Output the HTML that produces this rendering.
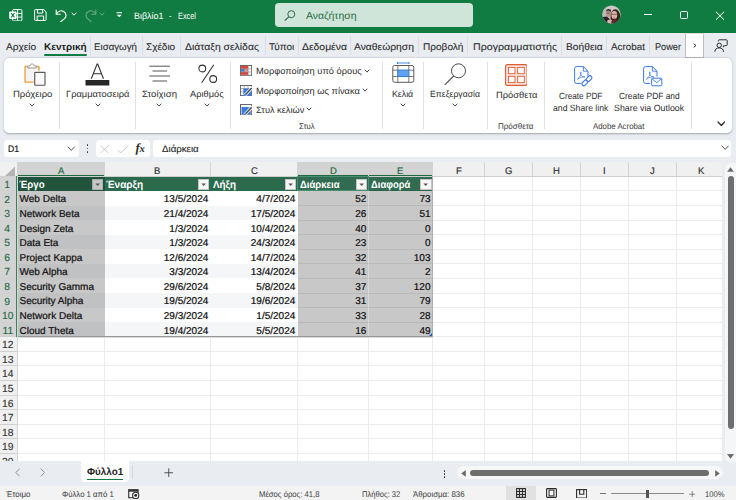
<!DOCTYPE html>
<html lang="el"><head><meta charset="utf-8"><title>Βιβλίο1 - Excel</title>
<style>
*{box-sizing:border-box;margin:0;padding:0}
html,body{width:736px;height:500px;overflow:hidden;background:#e9ecf0;font-family:"Liberation Sans",sans-serif;color:#2b2b2b;text-rendering:geometricPrecision}
#app{position:relative;width:736px;height:500px;overflow:hidden}
#app div,#app svg{position:absolute}
.t{white-space:nowrap;line-height:1;transform-origin:0 0}
.sep{top:35.500px;width:1px;height:19.500px;background:#dadde2}
.vs{top:62px;width:1px;height:67px;background:#e0e0e0}
.box{background:#fff;border-radius:3.5px;top:140px;height:17px}
#grid{left:0;top:162px;width:722.5px;height:299.5px;background:#fff;overflow:hidden}
.ch{top:0;height:14.5px;background:#f0f0f0}
.cell{font-size:10px;color:#111;white-space:nowrap;overflow:hidden;line-height:1}
.r{text-align:right}
.hl{left:0;height:1px;background:#ececec}
.vl{top:0;width:1px;background:#ececec}
</style></head><body><div id="app">

<div id="title" style="left:0;top:0;width:736px;height:32.5px;background:#107c41"></div>
<svg style="left:9px;top:8.5px" width="13.5" height="12.5" viewBox="0 0 13.5 12.5"><rect x="3.6" y="0.6" width="9.300" height="11.300" rx="1" fill="none" stroke="#fff" stroke-width="1"/><path d="M8.600 0.600v11.300M3.600 4.400h9.300M3.600 8.100h9.300" stroke="#fff" stroke-width="0.900"/><rect x="0.200" y="2.600" width="7.300" height="7.300" rx="0.800" fill="#fff"/><path d="M2.200 4.200l3.300 4.100M5.500 4.200L2.200 8.300" stroke="#107c41" stroke-width="1.100"/></svg>
<svg style="left:33.500px;top:9px" width="13" height="12" viewBox="0 0 13 12"><path d="M1.300 0.600h8.400l2.400 2.200v7.900a0.700 0.700 0 0 1-.700.700H1.300a0.700 0.700 0 0 1-.700-.700V1.300a0.700 0.700 0 0 1 .700-.700z" fill="none" stroke="#fff" stroke-width="1"/><path d="M3.400 0.800v3.300h5.300V0.800M3.200 11.200V7h6.400v4.200" fill="none" stroke="#fff" stroke-width="1"/></svg>
<svg style="left:55px;top:8.500px" width="13" height="13.500" viewBox="0 0 13 13.500"><path d="M1.200 0.800v4.400h4.400" fill="none" stroke="#fff" stroke-width="1.100"/><path d="M1.400 5C2.800 2.400 5.800 1 8.600 2.400c2.800 1.500 3.200 5.200.900 7.300L5.400 12.900" fill="none" stroke="#fff" stroke-width="1.100"/></svg>
<svg style="left:70.50px;top:12.40px" width="6" height="4.2" viewBox="0 0 6 4.2"><path d="M1 1L3.0 3.2L5 1" fill="none" stroke="#fff" stroke-width="1" stroke-linecap="round" stroke-linejoin="round"/></svg>
<svg style="left:84px;top:8.500px;opacity:.36" width="13" height="13.500" viewBox="0 0 13 13.500"><path d="M11.800 0.800v4.400H7.400" fill="none" stroke="#fff" stroke-width="1.100"/><path d="M11.600 5C10.200 2.400 7.200 1 4.400 2.400c-2.800 1.500-3.200 5.200-.900 7.300l4.100 3.200" fill="none" stroke="#fff" stroke-width="1.100"/></svg>
<svg style="left:99.30px;top:12.40px;opacity:0.36" width="6" height="4.2" viewBox="0 0 6 4.2"><path d="M1 1L3.0 3.2L5 1" fill="none" stroke="#fff" stroke-width="1" stroke-linecap="round" stroke-linejoin="round"/></svg>
<svg style="left:115.500px;top:12.200px" width="6.500" height="6" viewBox="0 0 6.500 6"><path d="M0.500 0.700h5.500" stroke="#fff" stroke-width="1"/><path d="M0.700 2.800L3.250 5.300 5.800 2.800z" fill="#fff"/></svg>
<div class="t" style="left:133.80px;top:11.98px;font-size:9.2px;transform:scaleX(0.9717);color:#fff;">Βιβλίο1</div>
<div class="t" style="left:169.20px;top:11.98px;font-size:9.2px;transform:scaleX(0.7787);color:#fff;">-</div>
<div class="t" style="left:178.20px;top:11.98px;font-size:9.2px;transform:scaleX(0.8002);color:#fff;">Excel</div>
<div style="left:274.500px;top:3px;width:198.500px;height:24px;background:#cfe5d9;border-radius:4px"></div>
<svg style="left:284px;top:9.500px" width="12" height="11" viewBox="0 0 12 11"><circle cx="7.300" cy="4.200" r="3.500" fill="none" stroke="#2d6b4a" stroke-width="1"/><path d="M4.800 6.800L0.800 10.500" stroke="#2d6b4a" stroke-width="1.100"/></svg>
<div class="t" style="left:305.80px;top:11.97px;font-size:10.2px;transform:scaleX(1.0291);color:#2a6a48;">Αναζήτηση</div>
<svg style="left:602px;top:5.100px" width="19" height="19" viewBox="0 0 19 19"><defs><clipPath id="av"><circle cx="9.500" cy="9.500" r="9.100"/></clipPath></defs><g clip-path="url(#av)"><rect width="19" height="19" fill="#cdc8c8"/><rect x="0" y="0" width="5" height="19" fill="#bdb8b8"/><ellipse cx="6.700" cy="5.800" rx="2.500" ry="1.700" fill="#3a3230"/><ellipse cx="6.400" cy="8.800" rx="2.300" ry="3.100" fill="#b4968a"/><path d="M4.300 8h4.200" stroke="#5a4a46" stroke-width="0.700"/><path d="M0 12.300L4.800 11.500 8.500 14.500V19H0z" fill="#27262b"/><ellipse cx="13.400" cy="11.800" rx="4.900" ry="7.600" fill="#40231f"/><ellipse cx="7.800" cy="16.800" rx="2.600" ry="2.400" fill="#d8b8ac"/><ellipse cx="12.300" cy="9.900" rx="2.900" ry="3.900" fill="#dbb6a6"/><path d="M9.700 9.300h5.200" stroke="#3a2a2a" stroke-width="0.600"/><ellipse cx="12.400" cy="12.200" rx="0.900" ry="0.400" fill="#b24848"/><path d="M9.500 16L13 15 19 17V19H9z" fill="#57302f"/></g></svg>
<div style="left:643.500px;top:14px;width:8px;height:1px;background:#fff"></div>
<div style="left:679.500px;top:11px;width:8px;height:8px;border:1px solid #fff;border-radius:1.500px"></div>
<svg style="left:715px;top:10.500px" width="10" height="9.500" viewBox="0 0 10 9.500"><path d="M0.900 0.700l8.200 8.100M9.100 0.700L0.900 8.800" stroke="#fff" stroke-width="1"/></svg>
<div class="t" style="left:5.50px;top:42.97px;font-size:9.7px;transform:scaleX(1.0465);color:#303030;-webkit-text-stroke:.1px #303030;">Αρχείο</div>
<div class="t" style="left:44.00px;top:42.97px;font-size:9.7px;transform:scaleX(1.0346);font-weight:bold;color:#1f1f1f;">Κεντρική</div>
<div class="t" style="left:94.30px;top:42.97px;font-size:9.7px;transform:scaleX(1.0029);color:#303030;-webkit-text-stroke:.1px #303030;">Εισαγωγή</div>
<div class="t" style="left:145.80px;top:42.97px;font-size:9.7px;transform:scaleX(1.0292);color:#303030;-webkit-text-stroke:.1px #303030;">Σχέδιο</div>
<div class="t" style="left:185.00px;top:42.97px;font-size:9.7px;transform:scaleX(1.0730);color:#303030;-webkit-text-stroke:.1px #303030;">Διάταξη σελίδας</div>
<div class="t" style="left:269.30px;top:42.97px;font-size:9.7px;transform:scaleX(1.0289);color:#303030;-webkit-text-stroke:.1px #303030;">Τύποι</div>
<div class="t" style="left:302.00px;top:42.97px;font-size:9.7px;transform:scaleX(1.0726);color:#303030;-webkit-text-stroke:.1px #303030;">Δεδομένα</div>
<div class="t" style="left:354.00px;top:42.97px;font-size:9.7px;transform:scaleX(1.0646);color:#303030;-webkit-text-stroke:.1px #303030;">Αναθεώρηση</div>
<div class="t" style="left:422.50px;top:42.97px;font-size:9.7px;transform:scaleX(1.0399);color:#303030;-webkit-text-stroke:.1px #303030;">Προβολή</div>
<div class="t" style="left:472.50px;top:42.97px;font-size:9.7px;transform:scaleX(1.0989);color:#303030;-webkit-text-stroke:.1px #303030;">Προγραμματιστής</div>
<div class="t" style="left:565.50px;top:42.97px;font-size:9.7px;transform:scaleX(1.0568);color:#303030;-webkit-text-stroke:.1px #303030;">Βοήθεια</div>
<div class="t" style="left:610.90px;top:42.97px;font-size:9.7px;transform:scaleX(1.0205);color:#303030;-webkit-text-stroke:.1px #303030;">Acrobat</div>
<div class="t" style="left:655.10px;top:42.97px;font-size:9.7px;transform:scaleX(0.9455);color:#303030;-webkit-text-stroke:.1px #303030;">Power</div>
<div class="t" style="left:684.00px;top:42.97px;font-size:9.7px;transform:scaleX(0.7751);color:#333;">P</div>
<div style="left:43.800px;top:54px;width:43.200px;height:1.700px;background:#107c41;border-radius:1px"></div>
<div class="sep" style="left:89.5px"></div>
<div class="sep" style="left:142.0px"></div>
<div class="sep" style="left:179.5px"></div>
<div class="sep" style="left:264.5px"></div>
<div class="sep" style="left:298.0px"></div>
<div class="sep" style="left:350.0px"></div>
<div class="sep" style="left:417.7px"></div>
<div class="sep" style="left:467.0px"></div>
<div class="sep" style="left:560.8px"></div>
<div class="sep" style="left:605.9px"></div>
<div class="sep" style="left:649.3px"></div>
<div style="left:682px;top:34px;width:4px;height:22px;background:#e9ecf0"></div>
<div style="left:685.200px;top:33px;width:18.400px;height:25px;background:#fff;border:1px solid #bdbdbd;border-top-color:#dcdcdc;border-radius:1.500px"></div>
<svg style="left:692.600px;top:42.900px" width="4.400" height="5" viewBox="0 0 4.400 5"><path d="M1 1L3 2.500 1 4" fill="none" stroke="#2e2e2e" stroke-width="1" stroke-linecap="round" stroke-linejoin="round"/></svg>
<svg style="left:713.500px;top:39px" width="14" height="13.500" viewBox="0 0 14 13.500"><circle cx="5.200" cy="6.300" r="2.200" fill="none" stroke="#2e2e2e" stroke-width="1"/><path d="M0.900 12.800c0-2.600 1.600-3.900 4.300-3.900s4.300 1.300 4.300 3.900" fill="none" stroke="#2e2e2e" stroke-width="1"/><path d="M4.400 2.400V1.600a0.800 0.800 0 0 1 .8-.8h7.200a0.800 0.800 0 0 1 .8.800v4.200a0.800 0.800 0 0 1-.8.800h-1.600l-1.500 1.400V6.600H9" fill="none" stroke="#2e2e2e" stroke-width="1"/></svg>
<div style="left:3.600px;top:58.200px;width:728.200px;height:74.900px;background:#fff;border-radius:5px;box-shadow:0 0.800px 2px rgba(0,0,0,.30)"></div>
<div class="vs" style="left:58.9px"></div>
<div class="vs" style="left:135.3px"></div>
<div class="vs" style="left:230.0px"></div>
<div class="vs" style="left:382.0px"></div>
<div class="vs" style="left:422.5px"></div>
<div class="vs" style="left:486.5px"></div>
<div class="vs" style="left:543.5px"></div>
<div class="vs" style="left:691.3px"></div>
<svg style="left:23.500px;top:63px" width="22" height="23" viewBox="0 0 22 23"><path d="M4.300 3.600H1.700a0.600 0.600 0 0 0-.6.600v14.200a0.600 0.600 0 0 0 .6.600h7.800" fill="none" stroke="#f29d38" stroke-width="1.500"/><rect x="1.800" y="4.300" width="9" height="14" fill="#f4f4f4"/><path d="M11.700 3.600h2.600a0.600 0.600 0 0 1 .6.600v3.600" fill="none" stroke="#f29d38" stroke-width="1.500"/><path d="M3.800 5V3.700c0-.5.400-.9.900-.9h1.200C6.100 1.700 7 0.900 8 0.900s1.900.8 2.100 1.900h1.200c.5 0 .9.400.9.900V5z" fill="#fff" stroke="#8a8a8a" stroke-width="0.900"/><rect x="10.700" y="9.300" width="10.300" height="12.900" rx="0.500" fill="#fafafa" stroke="#585858" stroke-width="1.150"/></svg>
<div class="t" style="left:13.00px;top:89.97px;font-size:9.0px;transform:scaleX(1.0574);color:#2e2e2e;">Πρόχειρο</div>
<svg style="left:29.40px;top:103.15px" width="6.0" height="4.1" viewBox="0 0 6.0 4.1"><path d="M1 1L3.0 3.1L5.0 1" fill="none" stroke="#444" stroke-width="1.0" stroke-linecap="round" stroke-linejoin="round"/></svg>
<svg style="left:85px;top:63px" width="25" height="23" viewBox="0 0 25 23"><path d="M6.300 15.700L12.100 1h.6l5.800 14.700M8.300 10.800h8.200" fill="none" stroke="#333" stroke-width="1.100"/><rect x="0.500" y="17" width="23.800" height="5.500" fill="#262626"/></svg>
<div class="t" style="left:65.80px;top:89.97px;font-size:9.0px;transform:scaleX(1.0367);color:#2e2e2e;">Γραμματοσειρά</div>
<svg style="left:94.50px;top:103.15px" width="6.0" height="4.1" viewBox="0 0 6.0 4.1"><path d="M1 1L3.0 3.1L5.0 1" fill="none" stroke="#444" stroke-width="1.0" stroke-linecap="round" stroke-linejoin="round"/></svg>
<svg style="left:149px;top:64.500px" width="21.500" height="17.500" viewBox="0 0 21.500 17.500"><path d="M0.300 1.200h20.700M3.500 6h14.500M0.300 11h20.700M3.500 16h14.500" stroke="#555" stroke-width="1"/></svg>
<div class="t" style="left:142.00px;top:89.97px;font-size:9.0px;transform:scaleX(1.0654);color:#2e2e2e;">Στοίχιση</div>
<svg style="left:156.30px;top:103.15px" width="6.0" height="4.1" viewBox="0 0 6.0 4.1"><path d="M1 1L3.0 3.1L5.0 1" fill="none" stroke="#444" stroke-width="1.0" stroke-linecap="round" stroke-linejoin="round"/></svg>
<svg style="left:197.500px;top:64px" width="19.500" height="19.500" viewBox="0 0 19.500 19.500"><circle cx="4.300" cy="4.500" r="3.400" fill="none" stroke="#333" stroke-width="1.100"/><circle cx="15.200" cy="15" r="3.400" fill="none" stroke="#333" stroke-width="1.100"/><path d="M15.800 0.800L3.700 18.800" stroke="#333" stroke-width="1.100"/></svg>
<div class="t" style="left:190.30px;top:89.97px;font-size:9.0px;transform:scaleX(1.0315);color:#2e2e2e;">Αριθμός</div>
<svg style="left:203.50px;top:103.15px" width="6.0" height="4.1" viewBox="0 0 6.0 4.1"><path d="M1 1L3.0 3.1L5.0 1" fill="none" stroke="#444" stroke-width="1.0" stroke-linecap="round" stroke-linejoin="round"/></svg>
<svg style="left:240px;top:65.200px" width="12.200" height="10.800" viewBox="0 0 12.200 10.800"><rect x="0.500" y="0.500" width="11.200" height="9.800" fill="#fff" stroke="#5a5a5a" stroke-width="0.900"/><rect x="1" y="1" width="7" height="2.700" fill="#e8413a"/><rect x="1" y="4" width="3.300" height="2.700" fill="#3f7fe0"/><rect x="4.700" y="4" width="3.300" height="2.700" fill="#f08a84"/><rect x="1" y="7.100" width="7" height="2.700" fill="#e8413a"/><path d="M4.500 0.500v9.800M8.200 0.500v9.800M0.500 3.850h11.200M0.500 6.950h11.200" stroke="#6a6a6a" stroke-width="0.500"/></svg>
<div class="t" style="left:255.90px;top:66.97px;font-size:9.0px;transform:scaleX(1.0311);color:#2e2e2e;">Μορφοποίηση υπό όρους</div>
<svg style="left:363.80px;top:68.55px" width="6.0" height="4.1" viewBox="0 0 6.0 4.1"><path d="M1 1L3.0 3.1L5.0 1" fill="none" stroke="#444" stroke-width="1.0" stroke-linecap="round" stroke-linejoin="round"/></svg>
<svg style="left:240px;top:84.600px" width="12.400" height="11" viewBox="0 0 12.400 11"><rect x="0.500" y="0.500" width="11.200" height="10" fill="#fff" stroke="#5a5a5a" stroke-width="0.900"/><path d="M0.500 3.600h11.200M0.500 6.900h11.200M4.200 0.500v10M8 0.500v10" stroke="#777" stroke-width="0.600"/><rect x="3.400" y="3.500" width="8.300" height="7" fill="#3c7be0"/><path d="M11.600 3.200L4.600 10.600" stroke="#fff" stroke-width="3" stroke-linecap="round"/><path d="M11.700 3.100L5.600 9.500" stroke="#4a4a4a" stroke-width="1.500"/><path d="M5.600 9.500L3.600 11" stroke="#3c7be0" stroke-width="1.600" stroke-linecap="round"/></svg>
<div class="t" style="left:255.90px;top:86.97px;font-size:9.0px;transform:scaleX(1.0293);color:#2e2e2e;">Μορφοποίηση ως πίνακα</div>
<svg style="left:361.80px;top:88.05px" width="6.0" height="4.1" viewBox="0 0 6.0 4.1"><path d="M1 1L3.0 3.1L5.0 1" fill="none" stroke="#444" stroke-width="1.0" stroke-linecap="round" stroke-linejoin="round"/></svg>
<svg style="left:240px;top:103.800px" width="12.400" height="11.300" viewBox="0 0 12.400 11.300"><rect x="0.500" y="0.500" width="11.200" height="10.300" fill="#fff" stroke="#5a5a5a" stroke-width="0.900"/><rect x="1.500" y="3" width="9.300" height="7" fill="#3c7be0"/><path d="M11.600 3.400L4.600 10.800" stroke="#fff" stroke-width="3" stroke-linecap="round"/><path d="M11.700 3.300L5.600 9.700" stroke="#4a4a4a" stroke-width="1.500"/><path d="M5.600 9.700L3.600 11.200" stroke="#3c7be0" stroke-width="1.600" stroke-linecap="round"/></svg>
<div class="t" style="left:255.50px;top:105.97px;font-size:9.0px;transform:scaleX(1.0242);color:#2e2e2e;">Στυλ κελιών</div>
<svg style="left:306.20px;top:107.15px" width="6.0" height="4.1" viewBox="0 0 6.0 4.1"><path d="M1 1L3.0 3.1L5.0 1" fill="none" stroke="#444" stroke-width="1.0" stroke-linecap="round" stroke-linejoin="round"/></svg>
<div class="t" style="left:298.90px;top:121.97px;font-size:8.3px;transform:scaleX(0.9411);color:#3a3a3a;">Στυλ</div>
<svg style="left:392px;top:61.500px" width="22.500" height="21" viewBox="0 0 22.500 21"><path d="M5.500 1h11.500M5.500 0v2M17 0v2" stroke="#2f7de1" stroke-width="0.900"/><rect x="0.800" y="3.500" width="21" height="16.800" rx="1.800" fill="#fff" stroke="#5a5a5a" stroke-width="1"/><path d="M0.800 8.200h21M0.800 14.500h21M5.800 3.500v16.800M16.800 3.500v16.800" stroke="#5a5a5a" stroke-width="0.800"/><rect x="5.800" y="8.200" width="11" height="6.300" fill="#5ea3ef" stroke="#2f7de1" stroke-width="0.800"/></svg>
<div class="t" style="left:392.30px;top:89.97px;font-size:9.0px;transform:scaleX(0.9754);color:#2e2e2e;">Κελιά</div>
<svg style="left:399.50px;top:103.15px" width="6.0" height="4.1" viewBox="0 0 6.0 4.1"><path d="M1 1L3.0 3.1L5.0 1" fill="none" stroke="#444" stroke-width="1.0" stroke-linecap="round" stroke-linejoin="round"/></svg>
<svg style="left:444px;top:62.500px" width="22.500" height="22.500" viewBox="0 0 22.500 22.500"><circle cx="14.500" cy="7.800" r="7" fill="none" stroke="#4a4a4a" stroke-width="1"/><path d="M9.700 13L0.800 21.800" stroke="#4a4a4a" stroke-width="1.100"/></svg>
<div class="t" style="left:430.00px;top:89.97px;font-size:9.0px;transform:scaleX(0.9645);color:#2e2e2e;">Επεξεργασία</div>
<svg style="left:451.50px;top:103.15px" width="6.0" height="4.1" viewBox="0 0 6.0 4.1"><path d="M1 1L3.0 3.1L5.0 1" fill="none" stroke="#444" stroke-width="1.0" stroke-linecap="round" stroke-linejoin="round"/></svg>
<svg style="left:504.800px;top:64.300px" width="22.700" height="22" viewBox="0 0 22.700 22"><rect x="0.600" y="0.600" width="21.500" height="20.800" rx="1.600" fill="#fbe5dd" stroke="#e2582f" stroke-width="1.100"/><rect x="3.400" y="3.400" width="6.600" height="6.300" fill="#fff" stroke="#e2582f" stroke-width="0.900"/><rect x="12.700" y="3.400" width="6.600" height="6.300" fill="#fff" stroke="#e2582f" stroke-width="0.900"/><rect x="3.400" y="12.300" width="6.600" height="6.300" fill="#fff" stroke="#e2582f" stroke-width="0.900"/><rect x="12.700" y="12.300" width="6.600" height="6.300" fill="#fff" stroke="#e2582f" stroke-width="0.900"/></svg>
<div class="t" style="left:495.50px;top:90.97px;font-size:9.0px;transform:scaleX(1.0421);color:#2e2e2e;">Πρόσθετα</div>
<div class="t" style="left:498.00px;top:121.97px;font-size:8.3px;transform:scaleX(0.9666);color:#3a3a3a;">Πρόσθετα</div>
<svg style="left:574px;top:65.500px" width="20" height="22" viewBox="0 0 20 22"><path d="M0.600 2.600a2 2 0 0 1 2-2h6.800l4.600 4.600v5.300M0.600 2.600v12.800a2 2 0 0 0 2 2h4.400" fill="none" stroke="#3b78e0" stroke-width="1"/><path d="M9.400 0.800v4.400h4.400" fill="none" stroke="#3b78e0" stroke-width="0.900"/><path d="M3.600 12.800c1.800-1 3.600-3.800 3.600-6.200 0-.9-.9-.9-.9 0 0 1.900 1.800 4.200 4.100 4.700.900.200.900-.700 0-.700-1.800 0-4.600.900-6.400 2.300-.700.600-.400.900-.400-.100z" fill="none" stroke="#3b78e0" stroke-width="0.700"/><g fill="none" stroke="#3b78e0" stroke-width="1.100"><rect x="7.500" y="15" width="6.500" height="3.800" rx="1.900" transform="rotate(-45 10.750 16.900)"/><rect x="11.800" y="10.800" width="6.500" height="3.800" rx="1.900" transform="rotate(-45 15 12.700)"/></g></svg>
<div class="t" style="left:558.60px;top:91.97px;font-size:9.0px;transform:scaleX(0.9133);color:#2e2e2e;">Create PDF</div>
<div class="t" style="left:552.80px;top:103.97px;font-size:9.0px;transform:scaleX(0.9618);color:#2e2e2e;">and Share link</div>
<svg style="left:642.500px;top:65.500px" width="20" height="22" viewBox="0 0 20 22"><path d="M0.600 2.600a2 2 0 0 1 2-2h6.800l4.600 4.600v5.300M0.600 2.600v12.800a2 2 0 0 0 2 2h4.400" fill="none" stroke="#3b78e0" stroke-width="1"/><path d="M9.400 0.800v4.400h4.400" fill="none" stroke="#3b78e0" stroke-width="0.900"/><path d="M3.600 12.800c1.800-1 3.600-3.800 3.600-6.200 0-.9-.9-.9-.9 0 0 1.900 1.800 4.200 4.100 4.700.900.200.900-.700 0-.700-1.800 0-4.600.900-6.400 2.300-.700.600-.400.900-.400-.100z" fill="none" stroke="#3b78e0" stroke-width="0.700"/><rect x="8.600" y="12.200" width="10.200" height="7.600" rx="1" fill="#fff" stroke="#3b78e0" stroke-width="1"/><path d="M9 12.800l4.700 3.800 4.700-3.800" fill="none" stroke="#3b78e0" stroke-width="0.900"/></svg>
<div class="t" style="left:618.60px;top:91.97px;font-size:9.0px;transform:scaleX(0.9335);color:#2e2e2e;">Create PDF and</div>
<div class="t" style="left:613.80px;top:103.97px;font-size:9.0px;transform:scaleX(0.9805);color:#2e2e2e;">Share via Outlook</div>
<div class="t" style="left:592.50px;top:121.97px;font-size:8.3px;transform:scaleX(0.9440);color:#3a3a3a;">Adobe Acrobat</div>
<svg style="left:716.80px;top:120.65px" width="8.6" height="5.5" viewBox="0 0 8.6 5.5"><path d="M1 1L4.3 4.5L7.6 1" fill="none" stroke="#2a2a2a" stroke-width="1.2" stroke-linecap="round" stroke-linejoin="round"/></svg>
<div class="box" style="left:3.500px;width:75.500px"></div>
<div class="t" style="left:7.90px;top:143.97px;font-size:9.4px;transform:scaleX(0.9225);color:#222;-webkit-text-stroke:.2px #222;">D1</div>
<svg style="left:67.30px;top:146.40px" width="8.4" height="5.4" viewBox="0 0 8.4 5.4"><path d="M1 1L4.2 4.4L7.4 1" fill="none" stroke="#444" stroke-width="0.95" stroke-linecap="round" stroke-linejoin="round"/></svg>
<div style="left:86.700px;top:144.35px;width:1.700px;height:1.700px;background:#333;border-radius:0.900px"></div>
<div style="left:86.700px;top:147.65px;width:1.700px;height:1.700px;background:#333;border-radius:0.900px"></div>
<div style="left:86.700px;top:150.85px;width:1.700px;height:1.700px;background:#333;border-radius:0.900px"></div>
<div class="box" style="left:95.500px;width:54px"></div>
<svg style="left:100px;top:144.500px" width="9" height="8.500" viewBox="0 0 9 8.500"><path d="M0.500 0.400l8 7.800M8.500 0.400l-8 7.800" stroke="#bdbdbd" stroke-width="0.800"/></svg>
<svg style="left:117px;top:144.500px" width="12" height="8.500" viewBox="0 0 12 8.500"><path d="M0.500 4.800l3.200 3.200L11.500 0.500" fill="none" stroke="#bdbdbd" stroke-width="0.800"/></svg>
<div class="t" style="left:135.500px;top:142px;font-family:'Liberation Serif',serif;font-style:italic;font-weight:bold;font-size:12.500px;color:#2b2b2b">f<span style="font-size:10.500px;position:relative;left:-0.300px">x</span></div>
<div class="box" style="left:153.300px;width:577.700px"></div>
<div class="t" style="left:161.70px;top:144.97px;font-size:9.5px;transform:scaleX(1.0206);color:#262626;-webkit-text-stroke:.12px #262626;">Διάρκεια</div>
<svg style="left:720.80px;top:145.30px" width="8.4" height="5.4" viewBox="0 0 8.4 5.4"><path d="M1 1L4.2 4.4L7.4 1" fill="none" stroke="#444" stroke-width="0.95" stroke-linecap="round" stroke-linejoin="round"/></svg>
<div id="grid">
<div style="left:0;top:0;width:722.500px;height:14.500px;background:#f0f0f0"></div>
<div style="left:0;top:0;width:17.500px;height:300px;background:#f0f0f0"></div>
<div class="hl" style="top:13.90px;width:722.600px"></div>
<div class="hl" style="top:28.47px;width:722.600px"></div>
<div class="hl" style="top:43.05px;width:722.600px"></div>
<div class="hl" style="top:57.62px;width:722.600px"></div>
<div class="hl" style="top:72.20px;width:722.600px"></div>
<div class="hl" style="top:86.78px;width:722.600px"></div>
<div class="hl" style="top:101.35px;width:722.600px"></div>
<div class="hl" style="top:115.93px;width:722.600px"></div>
<div class="hl" style="top:130.50px;width:722.600px"></div>
<div class="hl" style="top:145.07px;width:722.600px"></div>
<div class="hl" style="top:159.65px;width:722.600px"></div>
<div class="hl" style="top:174.23px;width:722.600px"></div>
<div class="hl" style="top:188.80px;width:722.600px"></div>
<div class="hl" style="top:203.38px;width:722.600px"></div>
<div class="hl" style="top:217.95px;width:722.600px"></div>
<div class="hl" style="top:232.52px;width:722.600px"></div>
<div class="hl" style="top:247.10px;width:722.600px"></div>
<div class="hl" style="top:261.67px;width:722.600px"></div>
<div class="hl" style="top:276.25px;width:722.600px"></div>
<div class="hl" style="top:290.83px;width:722.600px"></div>
<div class="hl" style="top:305.40px;width:722.600px"></div>
<div class="vl" style="left:17.0px;height:300px"></div>
<div class="vl" style="left:104.0px;height:300px"></div>
<div class="vl" style="left:210.0px;height:300px"></div>
<div class="vl" style="left:297.0px;height:300px"></div>
<div class="vl" style="left:368.0px;height:300px"></div>
<div class="vl" style="left:432.2px;height:300px"></div>
<div class="vl" style="left:483.6px;height:300px"></div>
<div class="vl" style="left:531.9px;height:300px"></div>
<div class="vl" style="left:580.0px;height:300px"></div>
<div class="vl" style="left:628.1px;height:300px"></div>
<div class="vl" style="left:676.4px;height:300px"></div>
<div class="vl" style="left:722.1px;height:300px"></div>
<div style="left:17.500px;top:14.40px;width:414.90px;height:160.32px;background:#fff"></div>
<div style="left:17.500px;top:43.55px;width:280.00px;height:14.575px;background:#f5f6f8"></div>
<div style="left:17.500px;top:72.70px;width:280.00px;height:14.575px;background:#f5f6f8"></div>
<div style="left:17.500px;top:101.85px;width:280.00px;height:14.575px;background:#f5f6f8"></div>
<div style="left:17.500px;top:131.00px;width:280.00px;height:14.575px;background:#f5f6f8"></div>
<div style="left:17.500px;top:160.15px;width:280.00px;height:14.575px;background:#f5f6f8"></div>
<div style="left:17.500px;top:14.40px;width:415.200px;height:14.575px;background:#2c6a4e"></div>
<div style="left:17.500px;top:14.40px;width:87px;height:160.325px;background:rgba(0,0,0,.215)"></div>
<div style="left:297.500px;top:28.97px;width:135.200px;height:145.75px;background:rgba(0,0,0,.215)"></div>
<div style="left:297.500px;top:14.40px;width:135.200px;height:14.575px;background:rgba(128,128,128,.07)"></div>
<div style="left:297.500px;top:28.47px;width:135.20px;height:1px;background:rgba(0,0,0,.075)"></div>
<div style="left:297.500px;top:43.05px;width:135.20px;height:1px;background:rgba(0,0,0,.075)"></div>
<div style="left:297.500px;top:57.62px;width:135.20px;height:1px;background:rgba(0,0,0,.075)"></div>
<div style="left:297.500px;top:72.20px;width:135.20px;height:1px;background:rgba(0,0,0,.075)"></div>
<div style="left:297.500px;top:86.78px;width:135.20px;height:1px;background:rgba(0,0,0,.075)"></div>
<div style="left:297.500px;top:101.35px;width:135.20px;height:1px;background:rgba(0,0,0,.075)"></div>
<div style="left:297.500px;top:115.93px;width:135.20px;height:1px;background:rgba(0,0,0,.075)"></div>
<div style="left:297.500px;top:130.50px;width:135.20px;height:1px;background:rgba(0,0,0,.075)"></div>
<div style="left:297.500px;top:145.07px;width:135.20px;height:1px;background:rgba(0,0,0,.075)"></div>
<div style="left:297.500px;top:159.65px;width:135.20px;height:1px;background:rgba(0,0,0,.075)"></div>
<div style="left:368.0px;top:28.97px;width:1px;height:145.75px;background:rgba(255,255,255,.3)"></div>
</div>
<div style="left:17.5px;top:162px;width:87.0px;height:14.500px;background:#d3d3d3"></div>
<div style="left:17.5px;top:175.200px;width:87.0px;height:1.300px;background:#1e6b41"></div>
<div class="t" style="left:57.82px;top:166.97px;font-size:9.6px;transform:scaleX(0.9896);color:#1e6b41;-webkit-text-stroke:.18px #1e6b41;">A</div>
<div class="t" style="left:154.34px;top:166.97px;font-size:9.6px;transform:scaleX(0.9896);color:#333;-webkit-text-stroke:.18px #333;">B</div>
<div class="t" style="left:250.58px;top:166.97px;font-size:9.6px;transform:scaleX(0.9896);color:#333;-webkit-text-stroke:.18px #333;">C</div>
<div style="left:297.5px;top:162px;width:71.0px;height:14.500px;background:#d3d3d3"></div>
<div style="left:297.5px;top:175.200px;width:71.0px;height:1.300px;background:#1e6b41"></div>
<div class="t" style="left:329.58px;top:166.97px;font-size:9.6px;transform:scaleX(0.9896);color:#1e6b41;-webkit-text-stroke:.18px #1e6b41;">D</div>
<div style="left:368.5px;top:162px;width:64.19999999999999px;height:14.500px;background:#d3d3d3"></div>
<div style="left:368.5px;top:175.200px;width:64.19999999999999px;height:1.300px;background:#1e6b41"></div>
<div class="t" style="left:397.44px;top:166.97px;font-size:9.6px;transform:scaleX(0.9896);color:#1e6b41;-webkit-text-stroke:.18px #1e6b41;">E</div>
<div class="t" style="left:455.50px;top:166.97px;font-size:9.6px;transform:scaleX(0.9896);color:#333;-webkit-text-stroke:.18px #333;">F</div>
<div class="t" style="left:504.55px;top:166.97px;font-size:9.6px;transform:scaleX(0.9896);color:#333;-webkit-text-stroke:.18px #333;">G</div>
<div class="t" style="left:553.03px;top:166.97px;font-size:9.6px;transform:scaleX(0.9896);color:#333;-webkit-text-stroke:.18px #333;">H</div>
<div class="t" style="left:603.22px;top:166.97px;font-size:9.6px;transform:scaleX(0.9896);color:#333;-webkit-text-stroke:.18px #333;">I</div>
<div class="t" style="left:650.38px;top:166.97px;font-size:9.6px;transform:scaleX(0.9896);color:#333;-webkit-text-stroke:.18px #333;">J</div>
<div class="t" style="left:697.69px;top:166.97px;font-size:9.6px;transform:scaleX(0.9896);color:#333;-webkit-text-stroke:.18px #333;">K</div>
<div style="left:17.0px;top:162px;width:1px;height:14.500px;background:#d4d4d4"></div>
<div style="left:104.0px;top:162px;width:1px;height:14.500px;background:#d4d4d4"></div>
<div style="left:210.0px;top:162px;width:1px;height:14.500px;background:#d4d4d4"></div>
<div style="left:297.0px;top:162px;width:1px;height:14.500px;background:#d4d4d4"></div>
<div style="left:368.0px;top:162px;width:1px;height:14.500px;background:#d4d4d4"></div>
<div style="left:432.2px;top:162px;width:1px;height:14.500px;background:#d4d4d4"></div>
<div style="left:483.6px;top:162px;width:1px;height:14.500px;background:#d4d4d4"></div>
<div style="left:531.9px;top:162px;width:1px;height:14.500px;background:#d4d4d4"></div>
<div style="left:580.0px;top:162px;width:1px;height:14.500px;background:#d4d4d4"></div>
<div style="left:628.1px;top:162px;width:1px;height:14.500px;background:#d4d4d4"></div>
<div style="left:676.4px;top:162px;width:1px;height:14.500px;background:#d4d4d4"></div>
<div style="left:0;top:176px;width:722.500px;height:1px;background:#cfcfcf"></div>
<svg style="left:4.500px;top:165.500px" width="10.500" height="10" viewBox="0 0 10.500 10"><path d="M10.500 0v10H0z" fill="#b4b4b4"/></svg>
<div style="left:0;top:176.40px;width:17.500px;height:14.575px;background:#d3d3d3"></div>
<div style="left:0;top:175.90px;width:17.500px;height:1px;background:#d0d0d0"></div>
<div class="t" style="left:4.34px;top:180.97px;font-size:10.3px;transform:scaleX(1.0000);color:#1e6b41;-webkit-text-stroke:0.12px #1e6b41;">1</div>
<div style="left:0;top:190.97px;width:17.500px;height:14.575px;background:#d3d3d3"></div>
<div style="left:0;top:190.47px;width:17.500px;height:1px;background:#d0d0d0"></div>
<div class="t" style="left:4.34px;top:195.97px;font-size:10.3px;transform:scaleX(1.0000);color:#1e6b41;-webkit-text-stroke:0.12px #1e6b41;">2</div>
<div style="left:0;top:205.55px;width:17.500px;height:14.575px;background:#d3d3d3"></div>
<div style="left:0;top:205.05px;width:17.500px;height:1px;background:#d0d0d0"></div>
<div class="t" style="left:4.34px;top:209.97px;font-size:10.3px;transform:scaleX(1.0000);color:#1e6b41;-webkit-text-stroke:0.12px #1e6b41;">3</div>
<div style="left:0;top:220.12px;width:17.500px;height:14.575px;background:#d3d3d3"></div>
<div style="left:0;top:219.62px;width:17.500px;height:1px;background:#d0d0d0"></div>
<div class="t" style="left:4.34px;top:224.97px;font-size:10.3px;transform:scaleX(1.0000);color:#1e6b41;-webkit-text-stroke:0.12px #1e6b41;">4</div>
<div style="left:0;top:234.70px;width:17.500px;height:14.575px;background:#d3d3d3"></div>
<div style="left:0;top:234.20px;width:17.500px;height:1px;background:#d0d0d0"></div>
<div class="t" style="left:4.34px;top:238.97px;font-size:10.3px;transform:scaleX(1.0000);color:#1e6b41;-webkit-text-stroke:0.12px #1e6b41;">5</div>
<div style="left:0;top:249.28px;width:17.500px;height:14.575px;background:#d3d3d3"></div>
<div style="left:0;top:248.78px;width:17.500px;height:1px;background:#d0d0d0"></div>
<div class="t" style="left:4.34px;top:253.97px;font-size:10.3px;transform:scaleX(1.0000);color:#1e6b41;-webkit-text-stroke:0.12px #1e6b41;">6</div>
<div style="left:0;top:263.85px;width:17.500px;height:14.575px;background:#d3d3d3"></div>
<div style="left:0;top:263.35px;width:17.500px;height:1px;background:#d0d0d0"></div>
<div class="t" style="left:4.34px;top:267.98px;font-size:10.3px;transform:scaleX(1.0000);color:#1e6b41;-webkit-text-stroke:0.12px #1e6b41;">7</div>
<div style="left:0;top:278.43px;width:17.500px;height:14.575px;background:#d3d3d3"></div>
<div style="left:0;top:277.93px;width:17.500px;height:1px;background:#d0d0d0"></div>
<div class="t" style="left:4.34px;top:282.98px;font-size:10.3px;transform:scaleX(1.0000);color:#1e6b41;-webkit-text-stroke:0.12px #1e6b41;">8</div>
<div style="left:0;top:293.00px;width:17.500px;height:14.575px;background:#d3d3d3"></div>
<div style="left:0;top:292.50px;width:17.500px;height:1px;background:#d0d0d0"></div>
<div class="t" style="left:4.34px;top:297.98px;font-size:10.3px;transform:scaleX(1.0000);color:#1e6b41;-webkit-text-stroke:0.12px #1e6b41;">9</div>
<div style="left:0;top:307.57px;width:17.500px;height:14.575px;background:#d3d3d3"></div>
<div style="left:0;top:307.07px;width:17.500px;height:1px;background:#d0d0d0"></div>
<div class="t" style="left:2.08px;top:311.98px;font-size:10.3px;transform:scaleX(1.0000);color:#1e6b41;-webkit-text-stroke:0.12px #1e6b41;">10</div>
<div style="left:0;top:322.15px;width:17.500px;height:14.575px;background:#d3d3d3"></div>
<div style="left:0;top:321.65px;width:17.500px;height:1px;background:#d0d0d0"></div>
<div class="t" style="left:2.44px;top:326.98px;font-size:10.3px;transform:scaleX(1.0000);color:#1e6b41;-webkit-text-stroke:0.12px #1e6b41;">11</div>
<div style="left:0;top:336.23px;width:17.500px;height:1px;background:#d0d0d0"></div>
<div class="t" style="left:2.08px;top:340.98px;font-size:10.3px;transform:scaleX(1.0000);color:#333;-webkit-text-stroke:0.12px #333;">12</div>
<div style="left:0;top:350.80px;width:17.500px;height:1px;background:#d0d0d0"></div>
<div class="t" style="left:2.08px;top:355.98px;font-size:10.3px;transform:scaleX(1.0000);color:#333;-webkit-text-stroke:0.12px #333;">13</div>
<div style="left:0;top:365.38px;width:17.500px;height:1px;background:#d0d0d0"></div>
<div class="t" style="left:2.08px;top:369.98px;font-size:10.3px;transform:scaleX(1.0000);color:#333;-webkit-text-stroke:0.12px #333;">14</div>
<div style="left:0;top:379.95px;width:17.500px;height:1px;background:#d0d0d0"></div>
<div class="t" style="left:2.08px;top:384.98px;font-size:10.3px;transform:scaleX(1.0000);color:#333;-webkit-text-stroke:0.12px #333;">15</div>
<div style="left:0;top:394.52px;width:17.500px;height:1px;background:#d0d0d0"></div>
<div class="t" style="left:2.08px;top:399.98px;font-size:10.3px;transform:scaleX(1.0000);color:#333;-webkit-text-stroke:0.12px #333;">16</div>
<div style="left:0;top:409.10px;width:17.500px;height:1px;background:#d0d0d0"></div>
<div class="t" style="left:2.08px;top:413.98px;font-size:10.3px;transform:scaleX(1.0000);color:#333;-webkit-text-stroke:0.12px #333;">17</div>
<div style="left:0;top:423.67px;width:17.500px;height:1px;background:#d0d0d0"></div>
<div class="t" style="left:2.08px;top:428.98px;font-size:10.3px;transform:scaleX(1.0000);color:#333;-webkit-text-stroke:0.12px #333;">18</div>
<div style="left:0;top:438.25px;width:17.500px;height:1px;background:#d0d0d0"></div>
<div class="t" style="left:2.08px;top:442.98px;font-size:10.3px;transform:scaleX(1.0000);color:#333;-webkit-text-stroke:0.12px #333;">19</div>
<div style="left:0;top:452.83px;width:17.500px;height:1px;background:#d0d0d0"></div>
<div class="t" style="left:2.08px;top:457.98px;font-size:10.3px;transform:scaleX(1.0000);color:#333;-webkit-text-stroke:0.12px #333;">20</div>
<div style="left:17px;top:162px;width:1px;height:299.500px;background:#d4d4d4"></div>
<div style="left:16.300px;top:175.90px;width:1.200px;height:161.32px;background:#36845b"></div>
<div class="t" style="left:19.30px;top:179.97px;font-size:10.5px;transform:scaleX(0.9235);font-weight:bold;color:#fff;">Έργο</div>
<div style="left:91.8px;top:178.70px;width:11.500px;height:11.300px;background:#c6c6c6;border:0.800px solid #aaaaaa"></div>
<svg style="left:95.0px;top:183.40px" width="5.400" height="3.200" viewBox="0 0 5.400 3.200"><path d="M0.400 0.400h4.600L2.700 2.900z" fill="#555"/></svg>
<div class="t" style="left:106.30px;top:179.97px;font-size:10.5px;transform:scaleX(0.9575);font-weight:bold;color:#fff;">Έναρξη</div>
<div style="left:197.8px;top:178.70px;width:11.500px;height:11.300px;background:#f6f6f6;border:0.800px solid #c4c4c4"></div>
<svg style="left:201.0px;top:183.40px" width="5.400" height="3.200" viewBox="0 0 5.400 3.200"><path d="M0.400 0.400h4.600L2.700 2.900z" fill="#555"/></svg>
<div class="t" style="left:213.00px;top:179.97px;font-size:10.5px;transform:scaleX(0.9381);font-weight:bold;color:#fff;">Λήξη</div>
<div style="left:284.8px;top:178.70px;width:11.500px;height:11.300px;background:#f6f6f6;border:0.800px solid #c4c4c4"></div>
<svg style="left:288.0px;top:183.40px" width="5.400" height="3.200" viewBox="0 0 5.400 3.200"><path d="M0.400 0.400h4.600L2.700 2.900z" fill="#555"/></svg>
<div class="t" style="left:300.10px;top:179.97px;font-size:10.5px;transform:scaleX(0.9054);font-weight:bold;color:#fff;">Διάρκεια</div>
<div style="left:355.8px;top:178.70px;width:11.500px;height:11.300px;background:#f6f6f6;border:0.800px solid #c4c4c4"></div>
<svg style="left:359.0px;top:183.40px" width="5.400" height="3.200" viewBox="0 0 5.400 3.200"><path d="M0.400 0.400h4.600L2.700 2.900z" fill="#555"/></svg>
<div class="t" style="left:371.10px;top:179.97px;font-size:10.5px;transform:scaleX(0.8999);font-weight:bold;color:#fff;">Διαφορά</div>
<div style="left:420.0px;top:178.70px;width:11.500px;height:11.300px;background:#f6f6f6;border:0.800px solid #c4c4c4"></div>
<svg style="left:423.2px;top:183.40px" width="5.400" height="3.200" viewBox="0 0 5.400 3.200"><path d="M0.400 0.400h4.600L2.700 2.900z" fill="#555"/></svg>
<div class="t" style="left:19.50px;top:194.97px;font-size:10px;transform:scaleX(1.0000);color:#111;-webkit-text-stroke:0.22px #111;">Web Delta</div>
<div class="t" style="left:163.80px;top:194.97px;font-size:10px;transform:scaleX(1.0000);color:#111;-webkit-text-stroke:0.22px #111;">13/5/2024</div>
<div class="t" style="left:256.35px;top:194.97px;font-size:10px;transform:scaleX(1.0000);color:#111;-webkit-text-stroke:0.22px #111;">4/7/2024</div>
<div class="t" style="left:355.20px;top:194.97px;font-size:10px;transform:scaleX(1.0000);color:#111;-webkit-text-stroke:0.22px #111;">52</div>
<div class="t" style="left:419.40px;top:194.97px;font-size:10px;transform:scaleX(1.0000);color:#111;-webkit-text-stroke:0.22px #111;">73</div>
<div class="t" style="left:19.50px;top:209.97px;font-size:10px;transform:scaleX(1.0000);color:#111;-webkit-text-stroke:0.22px #111;">Network Beta</div>
<div class="t" style="left:163.80px;top:209.97px;font-size:10px;transform:scaleX(1.0000);color:#111;-webkit-text-stroke:0.22px #111;">21/4/2024</div>
<div class="t" style="left:250.80px;top:209.97px;font-size:10px;transform:scaleX(1.0000);color:#111;-webkit-text-stroke:0.22px #111;">17/5/2024</div>
<div class="t" style="left:355.20px;top:209.97px;font-size:10px;transform:scaleX(1.0000);color:#111;-webkit-text-stroke:0.22px #111;">26</div>
<div class="t" style="left:419.40px;top:209.97px;font-size:10px;transform:scaleX(1.0000);color:#111;-webkit-text-stroke:0.22px #111;">51</div>
<div class="t" style="left:19.50px;top:224.97px;font-size:10px;transform:scaleX(1.0000);color:#111;-webkit-text-stroke:0.22px #111;">Design Zeta</div>
<div class="t" style="left:169.35px;top:224.97px;font-size:10px;transform:scaleX(1.0000);color:#111;-webkit-text-stroke:0.22px #111;">1/3/2024</div>
<div class="t" style="left:250.80px;top:224.97px;font-size:10px;transform:scaleX(1.0000);color:#111;-webkit-text-stroke:0.22px #111;">10/4/2024</div>
<div class="t" style="left:355.20px;top:224.97px;font-size:10px;transform:scaleX(1.0000);color:#111;-webkit-text-stroke:0.22px #111;">40</div>
<div class="t" style="left:424.95px;top:224.97px;font-size:10px;transform:scaleX(1.0000);color:#111;-webkit-text-stroke:0.22px #111;">0</div>
<div class="t" style="left:19.50px;top:238.97px;font-size:10px;transform:scaleX(1.0000);color:#111;-webkit-text-stroke:0.22px #111;">Data Eta</div>
<div class="t" style="left:169.35px;top:238.97px;font-size:10px;transform:scaleX(1.0000);color:#111;-webkit-text-stroke:0.22px #111;">1/3/2024</div>
<div class="t" style="left:250.80px;top:238.97px;font-size:10px;transform:scaleX(1.0000);color:#111;-webkit-text-stroke:0.22px #111;">24/3/2024</div>
<div class="t" style="left:355.20px;top:238.97px;font-size:10px;transform:scaleX(1.0000);color:#111;-webkit-text-stroke:0.22px #111;">23</div>
<div class="t" style="left:424.95px;top:238.97px;font-size:10px;transform:scaleX(1.0000);color:#111;-webkit-text-stroke:0.22px #111;">0</div>
<div class="t" style="left:19.50px;top:253.97px;font-size:10px;transform:scaleX(1.0000);color:#111;-webkit-text-stroke:0.22px #111;">Project Kappa</div>
<div class="t" style="left:163.80px;top:253.97px;font-size:10px;transform:scaleX(1.0000);color:#111;-webkit-text-stroke:0.22px #111;">12/6/2024</div>
<div class="t" style="left:250.80px;top:253.97px;font-size:10px;transform:scaleX(1.0000);color:#111;-webkit-text-stroke:0.22px #111;">14/7/2024</div>
<div class="t" style="left:355.20px;top:253.97px;font-size:10px;transform:scaleX(1.0000);color:#111;-webkit-text-stroke:0.22px #111;">32</div>
<div class="t" style="left:413.80px;top:253.97px;font-size:10px;transform:scaleX(1.0000);color:#111;-webkit-text-stroke:0.22px #111;">103</div>
<div class="t" style="left:19.50px;top:267.98px;font-size:10px;transform:scaleX(1.0000);color:#111;-webkit-text-stroke:0.22px #111;">Web Alpha</div>
<div class="t" style="left:169.35px;top:267.98px;font-size:10px;transform:scaleX(1.0000);color:#111;-webkit-text-stroke:0.22px #111;">3/3/2024</div>
<div class="t" style="left:250.80px;top:267.98px;font-size:10px;transform:scaleX(1.0000);color:#111;-webkit-text-stroke:0.22px #111;">13/4/2024</div>
<div class="t" style="left:355.20px;top:267.98px;font-size:10px;transform:scaleX(1.0000);color:#111;-webkit-text-stroke:0.22px #111;">41</div>
<div class="t" style="left:424.95px;top:267.98px;font-size:10px;transform:scaleX(1.0000);color:#111;-webkit-text-stroke:0.22px #111;">2</div>
<div class="t" style="left:19.50px;top:282.98px;font-size:10px;transform:scaleX(1.0000);color:#111;-webkit-text-stroke:0.22px #111;">Security Gamma</div>
<div class="t" style="left:163.80px;top:282.98px;font-size:10px;transform:scaleX(1.0000);color:#111;-webkit-text-stroke:0.22px #111;">29/6/2024</div>
<div class="t" style="left:256.35px;top:282.98px;font-size:10px;transform:scaleX(1.0000);color:#111;-webkit-text-stroke:0.22px #111;">5/8/2024</div>
<div class="t" style="left:355.20px;top:282.98px;font-size:10px;transform:scaleX(1.0000);color:#111;-webkit-text-stroke:0.22px #111;">37</div>
<div class="t" style="left:413.80px;top:282.98px;font-size:10px;transform:scaleX(1.0000);color:#111;-webkit-text-stroke:0.22px #111;">120</div>
<div class="t" style="left:19.50px;top:296.98px;font-size:10px;transform:scaleX(1.0000);color:#111;-webkit-text-stroke:0.22px #111;">Security Alpha</div>
<div class="t" style="left:163.80px;top:296.98px;font-size:10px;transform:scaleX(1.0000);color:#111;-webkit-text-stroke:0.22px #111;">19/5/2024</div>
<div class="t" style="left:250.80px;top:296.98px;font-size:10px;transform:scaleX(1.0000);color:#111;-webkit-text-stroke:0.22px #111;">19/6/2024</div>
<div class="t" style="left:355.20px;top:296.98px;font-size:10px;transform:scaleX(1.0000);color:#111;-webkit-text-stroke:0.22px #111;">31</div>
<div class="t" style="left:419.40px;top:296.98px;font-size:10px;transform:scaleX(1.0000);color:#111;-webkit-text-stroke:0.22px #111;">79</div>
<div class="t" style="left:19.50px;top:311.98px;font-size:10px;transform:scaleX(1.0000);color:#111;-webkit-text-stroke:0.22px #111;">Network Delta</div>
<div class="t" style="left:163.80px;top:311.98px;font-size:10px;transform:scaleX(1.0000);color:#111;-webkit-text-stroke:0.22px #111;">29/3/2024</div>
<div class="t" style="left:256.35px;top:311.98px;font-size:10px;transform:scaleX(1.0000);color:#111;-webkit-text-stroke:0.22px #111;">1/5/2024</div>
<div class="t" style="left:355.20px;top:311.98px;font-size:10px;transform:scaleX(1.0000);color:#111;-webkit-text-stroke:0.22px #111;">33</div>
<div class="t" style="left:419.40px;top:311.98px;font-size:10px;transform:scaleX(1.0000);color:#111;-webkit-text-stroke:0.22px #111;">28</div>
<div class="t" style="left:19.50px;top:326.98px;font-size:10px;transform:scaleX(1.0000);color:#111;-webkit-text-stroke:0.22px #111;">Cloud Theta</div>
<div class="t" style="left:163.80px;top:326.98px;font-size:10px;transform:scaleX(1.0000);color:#111;-webkit-text-stroke:0.22px #111;">19/4/2024</div>
<div class="t" style="left:256.35px;top:326.98px;font-size:10px;transform:scaleX(1.0000);color:#111;-webkit-text-stroke:0.22px #111;">5/5/2024</div>
<div class="t" style="left:355.20px;top:326.98px;font-size:10px;transform:scaleX(1.0000);color:#111;-webkit-text-stroke:0.22px #111;">16</div>
<div class="t" style="left:419.40px;top:326.98px;font-size:10px;transform:scaleX(1.0000);color:#111;-webkit-text-stroke:0.22px #111;">49</div>
<div style="left:297.300px;top:176.00px;width:71.500px;height:14.97px;border:1.200px solid #4a9070"></div>
<div style="left:17.500px;top:335.73px;width:415px;height:1.200px;background:#989898"></div>
<div style="left:17.500px;top:336.93px;width:415px;height:1px;background:#dcdcdc"></div>
<div style="left:431.500px;top:176.40px;width:1px;height:160.33px;background:#adadad"></div>
<svg style="left:429px;top:333.33px" width="3" height="3" viewBox="0 0 4 4"><path d="M4 0v4H0z" fill="#2a5db0"/></svg>
<div style="left:722.500px;top:162px;width:13.500px;height:300px;background:#e9ecf0"></div>
<div style="left:724.600px;top:163px;width:12px;height:299px;background:#f6f6f6;border-radius:6px 0 0 6px / 6px 0 0 6px"></div>
<svg style="left:727px;top:166.500px" width="7" height="5" viewBox="0 0 7 5"><path d="M3.500 0.200L6.900 4.800H0.100z" fill="#6b6b6b"/></svg>
<div style="left:727.600px;top:175.500px;width:6px;height:253.500px;background:#6e6e6e;border-radius:3px"></div>
<svg style="left:727px;top:453.800px" width="7" height="5" viewBox="0 0 7 5"><path d="M3.500 4.800L6.900 0.200H0.100z" fill="#6b6b6b"/></svg>
<div style="left:0;top:461.100px;width:736px;height:24.400px;background:#e9ecf0"></div>
<div style="left:724.600px;top:455px;width:12px;height:7px;background:#f6f6f6;border-radius:0 0 0 6px"></div>
<svg style="left:727px;top:453.800px" width="7" height="5" viewBox="0 0 7 5"><path d="M3.500 4.800L6.900 0.200H0.100z" fill="#6b6b6b"/></svg>
<svg style="left:14.500px;top:468.300px" width="5.500" height="9" viewBox="0 0 5.500 9"><path d="M4.700 0.600L0.900 4.500l3.800 3.900" fill="none" stroke="#909090" stroke-width="1"/></svg>
<svg style="left:39.500px;top:468.300px" width="5.500" height="9" viewBox="0 0 5.500 9"><path d="M0.800 0.600L4.600 4.500 0.800 8.400" fill="none" stroke="#909090" stroke-width="1"/></svg>
<div style="left:81.200px;top:461.100px;width:48px;height:20.700px;background:#fff;border-radius:0 0 4px 4px"></div>
<div class="t" style="left:87.00px;top:467.98px;font-size:10.2px;transform:scaleX(0.9670);font-weight:bold;color:#1f1f1f;">Φύλλο1</div>
<div style="left:86.800px;top:478.500px;width:36.300px;height:1.500px;background:#107c41"></div>
<div style="left:132px;top:465px;width:1px;height:14px;background:#d2d5da"></div>
<svg style="left:163.500px;top:467.800px" width="9.500" height="9.500" viewBox="0 0 9.500 9.500"><path d="M4.750 0.300v8.900M0.300 4.750h8.900" stroke="#444" stroke-width="0.900"/></svg>
<div style="left:443.600px;top:470.05px;width:1.900px;height:1.900px;background:#2b2b2b;border-radius:1px"></div>
<div style="left:443.600px;top:472.95px;width:1.900px;height:1.900px;background:#2b2b2b;border-radius:1px"></div>
<div style="left:443.600px;top:475.85px;width:1.900px;height:1.900px;background:#2b2b2b;border-radius:1px"></div>
<div style="left:456.800px;top:466.400px;width:266.700px;height:13.100px;background:#f7f7f7;border-radius:6.500px"></div>
<svg style="left:460.500px;top:469.800px" width="5" height="6.800" viewBox="0 0 5 6.800"><path d="M0.200 3.400L4.800 0.100v6.600z" fill="#6b6b6b"/></svg>
<div style="left:470px;top:470px;width:239.300px;height:6.200px;background:#6e6e6e;border-radius:3.100px"></div>
<svg style="left:715px;top:469.800px" width="5" height="6.800" viewBox="0 0 5 6.800"><path d="M4.800 3.400L0.200 0.100v6.600z" fill="#6b6b6b"/></svg>
<div style="left:0;top:485.500px;width:736px;height:14.500px;background:#f3f3f3"></div>
<div class="t" style="left:5.58px;top:489.98px;font-size:8.3px;transform:scaleX(0.9568);color:#3a3a3a;">Έτοιμο</div>
<div class="t" style="left:62.00px;top:489.98px;font-size:8.3px;transform:scaleX(0.9378);color:#3a3a3a;">Φύλλο 1 από 1</div>
<svg style="left:128px;top:489px" width="11.500" height="10.500" viewBox="0 0 11.500 10.500"><rect x="0.700" y="0.700" width="9.400" height="8" fill="none" stroke="#333" stroke-width="1.100"/><rect x="0.700" y="0.700" width="9.400" height="2" fill="#333"/><circle cx="7.700" cy="6.400" r="3.100" fill="#f3f3f3" stroke="#333" stroke-width="1.100"/><circle cx="7.700" cy="6.400" r="1.400" fill="#222"/></svg>
<div class="t" style="left:259.00px;top:489.98px;font-size:8.3px;transform:scaleX(0.9256);color:#3a3a3a;">Μέσος όρος: 41,8</div>
<div class="t" style="left:362.30px;top:489.98px;font-size:8.3px;transform:scaleX(0.9132);color:#3a3a3a;">Πλήθος: 32</div>
<div class="t" style="left:412.50px;top:489.98px;font-size:8.3px;transform:scaleX(0.9451);color:#3a3a3a;">Άθροισμα: 836</div>
<div style="left:506px;top:485.500px;width:29.500px;height:14.500px;background:#e1e1e1"></div>
<svg style="left:515.500px;top:488.200px" width="10" height="10" viewBox="0 0 10 10"><rect x="0.600" y="0.600" width="8.800" height="8.800" fill="none" stroke="#2b2b2b" stroke-width="1.100"/><path d="M0.500 3.500h9M0.500 6.500h9M3.500 0.500v9M6.500 0.500v9" stroke="#2b2b2b" stroke-width="1.100"/></svg>
<svg style="left:545.500px;top:488.200px" width="11" height="10" viewBox="0 0 11 10"><rect x="0.600" y="0.600" width="9.800" height="8.800" rx="0.800" fill="none" stroke="#2b2b2b" stroke-width="1.100"/><rect x="3.100" y="2.100" width="4.800" height="5.800" fill="#fff" stroke="#2b2b2b" stroke-width="1"/></svg>
<svg style="left:575.700px;top:488.500px" width="11.300" height="9.700" viewBox="0 0 11.300 9.700"><rect x="0.600" y="0.600" width="10.100" height="8.500" fill="none" stroke="#2b2b2b" stroke-width="1.100"/><path d="M3.600 0.500v4.800h4.200V0.500" fill="none" stroke="#2b2b2b" stroke-width="1.100"/></svg>
<div style="left:600.300px;top:493.300px;width:5.500px;height:0.900px;background:#777"></div>
<div style="left:610.800px;top:493.300px;width:73.700px;height:0.900px;background:#8a8a8a"></div>
<div style="left:645.800px;top:489.500px;width:3.600px;height:8.500px;background:#555"></div>
<svg style="left:688.500px;top:490.500px" width="6.500" height="6.500" viewBox="0 0 6.500 6.500"><path d="M3.250 0.200v6.100M0.200 3.250h6.100" stroke="#777" stroke-width="0.900"/></svg>
<div class="t" style="left:704.50px;top:489.98px;font-size:8.3px;transform:scaleX(0.9177);color:#3a3a3a;">100%</div>
</div></body></html>
